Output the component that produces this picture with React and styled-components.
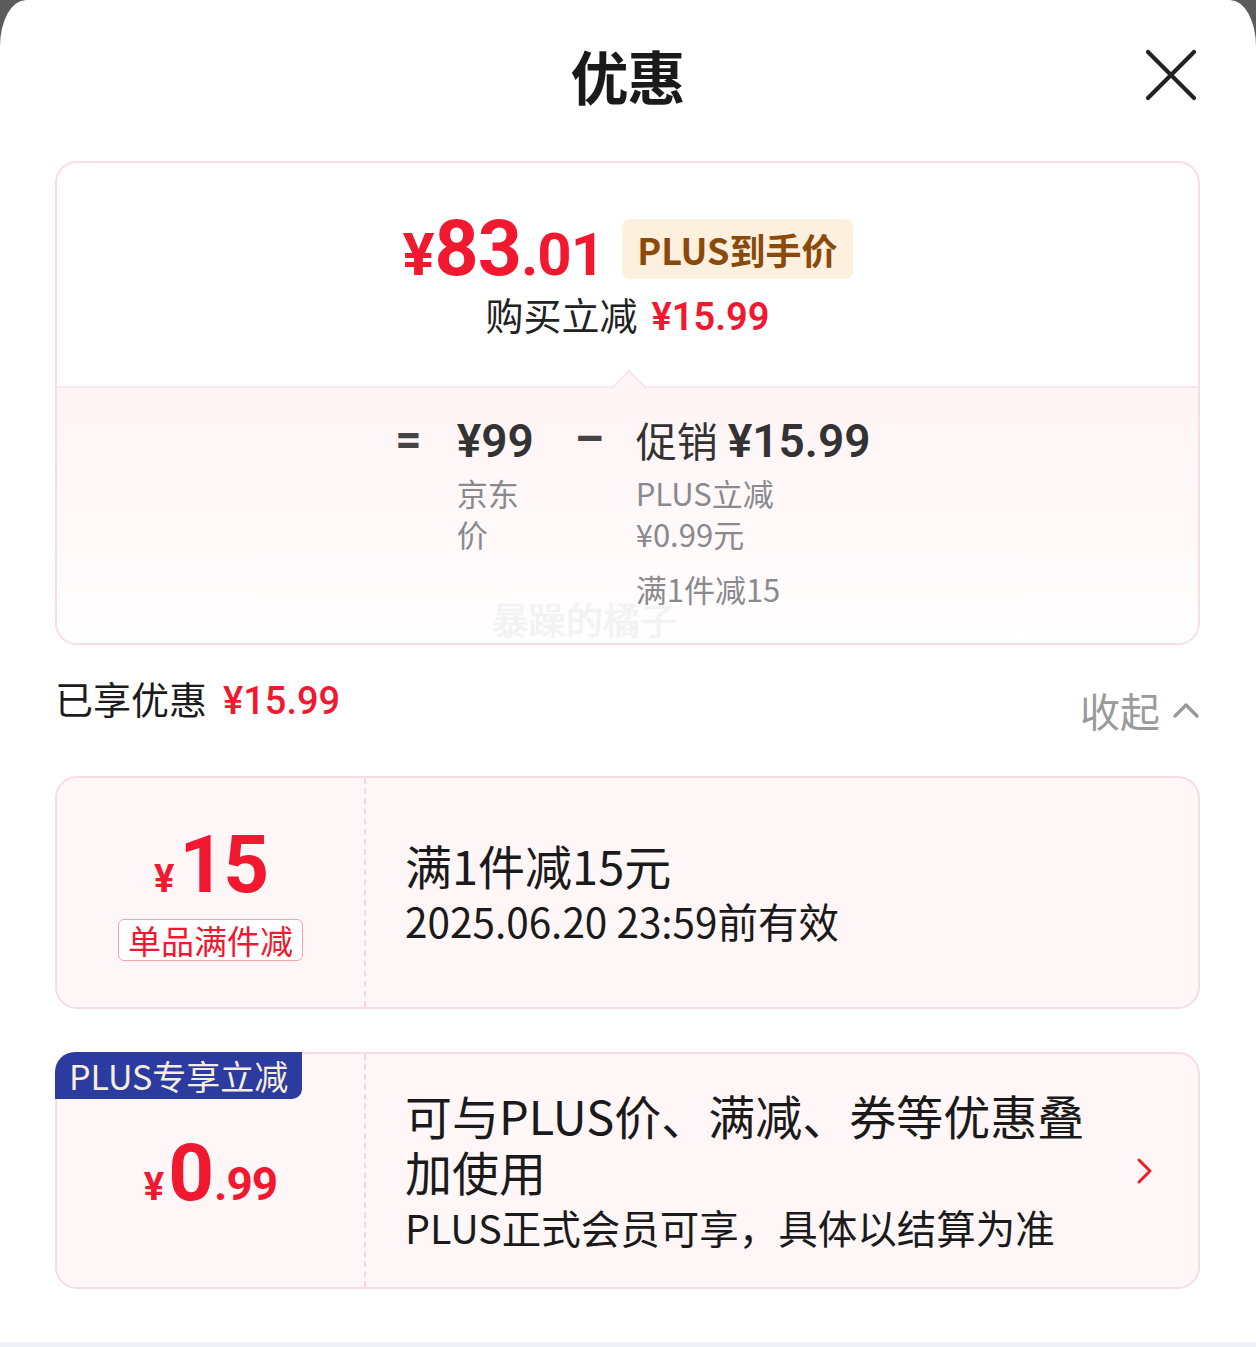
import React from "react";
import styled, { createGlobalStyle } from "styled-components";

const RED = "#f0192f";
const CJK = `"Noto Sans CJK SC", "Noto Sans", sans-serif`;
const NUM = `Roboto, "Noto Sans CJK SC", sans-serif`;

const Global = createGlobalStyle`
  * { box-sizing: border-box; }
  html, body { margin: 0; padding: 0; }
  body {
    background: #5b5b5b;
    font-family: ${CJK};
    color: #1c1c1c;
  }
`;

const Sheet = styled.div`
  background: #fff;
  border-radius: 26px 26px 0 0 / 46px 46px 0 0;
  min-height: 1347px;
  display: flex;
  flex-direction: column;
`;

const Content = styled.div`
  flex: 1;
  padding: 0 56px 0 55px;
  display: flex;
  flex-direction: column;
`;

const Header = styled.header`
  height: 150px;
  display: grid;
  grid-template-columns: 1fr auto 1fr;
  align-items: center;
`;

const Title = styled.h1`
  grid-column: 2;
  margin: 0;
  font-size: 58px;
  font-weight: 700;
  line-height: 1;
  color: #1a1a1a;
  letter-spacing: -1px;
`;

const CloseBtn = styled.button`
  grid-column: 3;
  justify-self: end;
  margin-right: 2px;
  width: 54px;
  height: 54px;
  padding: 0;
  border: 0;
  background: none;
  display: flex;
  align-items: center;
  justify-content: center;
`;

const SummaryCard = styled.section`
  margin-top: 11px;
  border: 2px solid #f8dde4;
  border-radius: 22px;
  overflow: hidden;
  position: relative;
`;

const SummaryTop = styled.div`
  height: 223px;
  display: flex;
  flex-direction: column;
  align-items: center;
  padding-top: 53px;
`;

const PriceRow = styled.div`
  display: flex;
  align-items: center;
  gap: 18px;
  height: 66px;
`;

const BigPrice = styled.div`
  font-family: ${NUM};
  font-weight: 700;
  color: ${RED};
  line-height: 1;
  white-space: nowrap;
`;

const PricePart = styled.span`
  font-size: ${(p) => p.$size}px;
  letter-spacing: ${(p) => p.$ls || 0}px;
`;

const PlusBadge = styled.span`
  background: #fdf0de;
  color: #8a4a0b;
  font-size: 36px;
  font-weight: 700;
  height: 60px;
  line-height: 60px;
  padding: 0 15px;
  border-radius: 8px;
  white-space: nowrap;
`;

const SubLine = styled.div`
  margin-top: 4px;
  font-size: 38px;
  line-height: 56px;
  color: #222;
  white-space: nowrap;
`;

const RedNum = styled.span`
  font-family: ${NUM};
  font-weight: ${(p) => p.$weight || 500};
  color: ${RED};
  margin-left: ${(p) => p.$ml || 0}px;
`;

const SummaryBottom = styled.div`
  height: 257px;
  position: relative;
  border-top: 2px solid #fbe7ec;
  background: linear-gradient(#fff4f6, #fffafb 70%, #fff);
  display: flex;
  justify-content: center;
  align-items: flex-start;
  padding-top: 26px;
  padding-left: 8px;

  &::before {
    content: "";
    position: absolute;
    top: -13px;
    left: 50%;
    width: 24px;
    height: 24px;
    margin-left: -12px;
    transform: rotate(45deg);
    background: #fff4f6;
    border-left: 2px solid #fbe7ec;
    border-top: 2px solid #fbe7ec;
  }
`;

const Operator = styled.div`
  font-family: ${NUM};
  font-weight: 700;
  font-size: 46px;
  line-height: 50px;
  color: #444;
  margin-left: ${(p) => p.$ml || 0}px;
`;

const FormulaCol = styled.div`
  width: ${(p) => p.$w}px;
  margin-left: ${(p) => p.$ml}px;
  display: flex;
  flex-direction: column;
`;

const FormulaMain = styled.div`
  font-size: 41px;
  line-height: 50px;
  color: #333;
  white-space: nowrap;
`;

const FormulaNum = styled.span`
  font-family: ${NUM};
  font-weight: 600;
  font-size: 46px;
  margin-left: ${(p) => p.$ml || 0}px;
`;

const FormulaNote = styled.div`
  font-size: 31px;
  line-height: 41px;
  color: #8a8a8e;
  margin-top: ${(p) => p.$mt || 0}px;
`;

const Watermark = styled.div`
  position: absolute;
  left: 435px;
  bottom: 4px;
  font-size: 37px;
  line-height: 40px;
  color: rgba(246, 246, 246, 0.9);
  text-shadow: 0 0 1px rgba(0, 0, 0, 0.12);
  pointer-events: none;
  white-space: nowrap;
`;

const SavedRow = styled.div`
  margin-top: 28px;
  display: flex;
  justify-content: space-between;
  align-items: flex-start;
`;

const SavedText = styled.div`
  font-size: 38px;
  line-height: 50px;
  color: #1c1c1c;
`;

const Collapse = styled.button`
  border: 0;
  background: none;
  padding: 0;
  margin-top: 12px;
  display: flex;
  align-items: center;
  gap: 12px;
  font-family: ${CJK};
  font-size: 40px;
  line-height: 50px;
  color: #9a9a9a;
`;

const Coupon = styled.div`
  margin-top: ${(p) => p.$mt}px;
  height: ${(p) => p.$h}px;
  border: 2px solid #f6dde2;
  border-radius: 22px;
  background: #fff6f7;
  display: grid;
  grid-template-columns: 309px 1fr;
  position: relative;
`;

const CouponLeft = styled.div`
  border-right: 2px dashed #f3d9de;
  display: flex;
  flex-direction: column;
  align-items: center;
  justify-content: center;
  padding-top: ${(p) => p.$pt || 0}px;
`;

const Amount = styled.div`
  font-family: ${NUM};
  font-weight: 700;
  color: ${RED};
  line-height: 1;
  white-space: nowrap;
`;

const AmountPart = styled.span`
  font-size: ${(p) => p.$size}px;
  letter-spacing: ${(p) => p.$ls || 0}px;
  margin-right: ${(p) => p.$mr || 0}px;
`;

const TypeTag = styled.span`
  margin-top: 14px;
  border: 1.5px solid #f2a4ad;
  border-radius: 6px;
  background: #fff;
  color: ${RED};
  font-size: 33px;
  line-height: 40px;
  padding: 0 9px;
  white-space: nowrap;
`;

const PlusTag = styled.span`
  position: absolute;
  top: -2px;
  left: -2px;
  height: 47px;
  line-height: 47px;
  padding: 0 14px;
  background: #2b3b9f;
  color: #f5eedc;
  font-size: 34px;
  border-radius: 20px 0 10px 0;
  white-space: nowrap;
`;

const CouponRight = styled.div`
  display: flex;
  align-items: center;
  padding-left: 39px;
  padding-right: 44px;
`;

const CouponText = styled.div`
  flex: 1;
  max-width: ${(p) => p.$mw || 9999}px;
  display: flex;
  flex-direction: column;
`;

const CouponTitle = styled.div`
  font-size: 47px;
  line-height: 56px;
  color: #1a1a1a;
`;

const CouponSub = styled.div`
  font-size: ${(p) => p.$size || 40}px;
  line-height: 56px;
  color: #1a1a1a;
  white-space: nowrap;
`;

const Chevron = styled.svg`
  margin-left: auto;
  flex-shrink: 0;
`;

const Footer = styled.div`
  height: 5px;
  background: #eff1f6;
`;

export default function App() {
  return (
    <>
      <Global />
      <Sheet>
        <Content>
          <Header>
            <Title>优惠</Title>
            <CloseBtn aria-label="关闭">
              <svg width="52" height="52" viewBox="0 0 52 52">
                <path d="M3 3 L49 49 M49 3 L3 49" stroke="#222" strokeWidth="4.2" strokeLinecap="round" />
              </svg>
            </CloseBtn>
          </Header>

          <SummaryCard>
            <SummaryTop>
              <PriceRow>
                <BigPrice>
                  <PricePart $size={60}>¥</PricePart>
                  <PricePart $size={77} $ls={-1}>83</PricePart>
                  <PricePart $size={60} $ls={-1}>.01</PricePart>
                </BigPrice>
                <PlusBadge>PLUS到手价</PlusBadge>
              </PriceRow>
              <SubLine>
                购买立减<RedNum $ml={14} $weight={600}>¥15.99</RedNum>
              </SubLine>
            </SummaryTop>
            <SummaryBottom>
              <Operator>=</Operator>
              <FormulaCol $w={82} $ml={35}>
                <FormulaMain>
                  <FormulaNum>¥99</FormulaNum>
                </FormulaMain>
                <FormulaNote $mt={6}>京东价</FormulaNote>
              </FormulaCol>
              <Operator $ml={36}>–</Operator>
              <FormulaCol $w={232} $ml={32}>
                <FormulaMain>
                  促销<FormulaNum $ml={10}>¥15.99</FormulaNum>
                </FormulaMain>
                <FormulaNote $mt={6}>
                  PLUS立减
                  <br />
                  ¥0.99元
                </FormulaNote>
                <FormulaNote $mt={14}>满1件减15</FormulaNote>
              </FormulaCol>
              <Watermark>暴躁的橘子</Watermark>
            </SummaryBottom>
          </SummaryCard>

          <SavedRow>
            <SavedText>
              已享优惠<RedNum $ml={16} $weight={500}>¥15.99</RedNum>
            </SavedText>
            <Collapse>
              收起
              <svg width="28" height="18" viewBox="0 0 28 18">
                <path d="M3 15 L14 4 L25 15" fill="none" stroke="#9a9a9a" strokeWidth="3.4" strokeLinecap="round" strokeLinejoin="round" />
              </svg>
            </Collapse>
          </SavedRow>

          <Coupon $mt={41} $h={233}>
            <CouponLeft>
              <Amount>
                <AmountPart $size={38} $mr={5}>¥</AmountPart>
                <AmountPart $size={80} $ls={-2}>15</AmountPart>
              </Amount>
              <TypeTag>单品满件减</TypeTag>
            </CouponLeft>
            <CouponRight>
              <CouponText>
                <CouponTitle>满1件减15元</CouponTitle>
                <CouponSub $size={40.5}>2025.06.20 23:59前有效</CouponSub>
              </CouponText>
            </CouponRight>
          </Coupon>

          <Coupon $mt={43} $h={237}>
            <PlusTag>PLUS专享立减</PlusTag>
            <CouponLeft $pt={4}>
              <Amount>
                <AmountPart $size={38} $mr={4}>¥</AmountPart>
                <AmountPart $size={80}>0</AmountPart>
                <AmountPart $size={46} $ls={-1}>.99</AmountPart>
              </Amount>
            </CouponLeft>
            <CouponRight>
              <CouponText $mw={700}>
                <CouponTitle>可与PLUS价、满减、券等优惠叠加使用</CouponTitle>
                <CouponSub $size={39.5}>PLUS正式会员可享，具体以结算为准</CouponSub>
              </CouponText>
              <Chevron width="18" height="28" viewBox="0 0 18 28">
                <path d="M3 3 L14 14 L3 25" fill="none" stroke="#e3222b" strokeWidth="3" strokeLinecap="round" strokeLinejoin="round" />
              </Chevron>
            </CouponRight>
          </Coupon>
        </Content>
        <Footer />
      </Sheet>
    </>
  );
}
